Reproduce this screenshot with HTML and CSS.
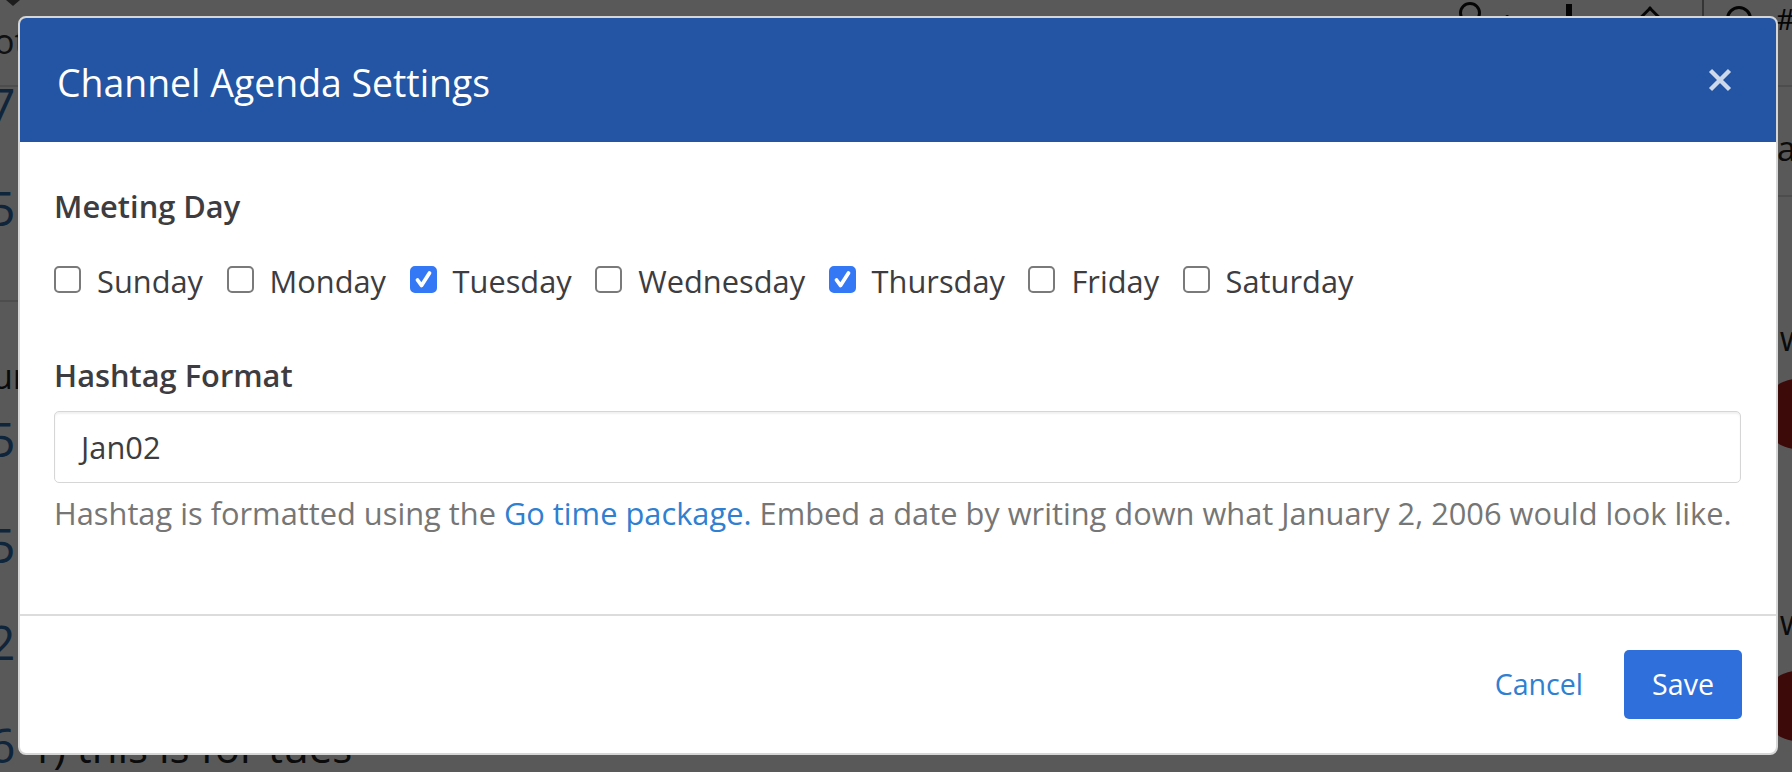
FILE: index.html
```html
<!DOCTYPE html>
<html lang="en">
<head>
<meta charset="utf-8">
<title>Channel Agenda Settings</title>
<link rel="stylesheet" href="styles.css">
</head>
<body>
<div class="page">
  <header class="topbar">
    <div class="top-left">
      <span class="chev"></span>
      <span class="desc">ot</span>
    </div>
    <div class="top-right">
      <span class="ic-circle"></span>
      <span class="ic-num">1</span>
      <span class="ic-bar"></span>
      <span class="ic-roof"></span>
      <span class="ic-div"></span>
      <span class="ic-circle small"></span>
      <span class="ic-hash">#</span>
    </div>
  </header>
  <div class="content">
    <main class="feed">
      <div class="num n1">7</div>
      <div class="num n2">5</div>
      <div class="rule"></div>
      <div class="word">ur</div>
      <div class="num n3">5</div>
      <div class="num n4">5</div>
      <div class="num n5">2</div>
      <div class="num-row"><span class="num n6">6</span><span class="msg">1) this is for tues</span></div>
    </main>
    <aside class="side">
      <div class="side-a">a</div>
      <div class="side-rule"></div>
      <div class="side-w">w</div>
      <div class="avatar"></div>
      <div class="side-w w2">w</div>
      <div class="avatar av2"></div>
    </aside>
  </div>
</div>

<div class="backdrop"></div>

<div class="modal-wrap">
  <div class="modal" role="dialog">
    <div class="modal-header">
      <h4 class="modal-title">Channel Agenda Settings</h4>
      <button class="close" aria-label="Close">
        <svg width="24" height="24" viewBox="0 0 24 24"><path d="M2.5 2.5 L21.5 21.5 M21.5 2.5 L2.5 21.5" stroke="currentColor" stroke-width="4.4" fill="none"/></svg>
      </button>
    </div>
    <div class="modal-body">
      <div class="control-label">Meeting Day</div>
      <div class="days">
        <label class="day"><span class="cb"></span>Sunday</label>
        <label class="day"><span class="cb"></span>Monday</label>
        <label class="day"><span class="cb on"><svg width="27" height="27" viewBox="0 0 27 27"><path d="M7.5 14 L11.5 19.5 L19.5 7" stroke="#fff" stroke-width="3.8" fill="none" stroke-linecap="round" stroke-linejoin="round"/></svg></span>Tuesday</label>
        <label class="day"><span class="cb"></span>Wednesday</label>
        <label class="day"><span class="cb on"><svg width="27" height="27" viewBox="0 0 27 27"><path d="M7.5 14 L11.5 19.5 L19.5 7" stroke="#fff" stroke-width="3.8" fill="none" stroke-linecap="round" stroke-linejoin="round"/></svg></span>Thursday</label>
        <label class="day"><span class="cb"></span>Friday</label>
        <label class="day"><span class="cb"></span>Saturday</label>
      </div>
      <div class="control-label second">Hashtag Format</div>
      <div class="form-control">Jan02</div>
      <p class="help">Hashtag is formatted using the <a class="link" href="#">Go time package.</a> Embed a date by writing down what January 2, 2006 would look like.</p>
    </div>
    <div class="modal-footer">
      <button class="btn btn-link">Cancel</button>
      <button class="btn btn-primary">Save</button>
    </div>
  </div>
</div>
</body>
</html>
```

FILE: styles.css
```css
* { box-sizing: border-box; }

html, body {
  margin: 0;
  padding: 0;
  width: 1792px;
  height: 772px;
  overflow: hidden;
  background: #fff;
  font-family: "Open Sans", "Liberation Sans", sans-serif;
}

/* ---------- background page (seen only at the edges) ---------- */
.page {
  width: 1792px;
  height: 772px;
  overflow: hidden;
  background: #fff;
}

.topbar {
  height: 87px;
  border-bottom: 2px solid #dcdcdc;
  display: flex;
  justify-content: space-between;
}

.top-left {
  display: flex;
  flex-direction: column;
  padding-left: 2px;
}

.chev {
  width: 0;
  height: 0;
  margin-left: 4px;
  border-left: 7px solid transparent;
  border-right: 7px solid transparent;
  border-top: 6px solid #555;
}

.desc {
  font-size: 34px;
  line-height: 1;
  color: #333;
  margin-top: 18px;
  margin-left: -8px;
}

.top-right {
  display: flex;
  align-items: flex-start;
}

.ic-circle {
  width: 22px;
  height: 22px;
  border: 3px solid #111;
  border-radius: 50%;
  margin-top: 2px;
  margin-right: 18px;
}
.ic-circle.small { width: 26px; height: 26px; margin-top: 6px; margin-right: 24px; }

.ic-num {
  font-size: 26px;
  line-height: 1;
  color: #111;
  margin-top: 10px;
  margin-right: 52px;
}

.ic-bar {
  width: 6px;
  height: 22px;
  background: #111;
  margin-top: 4px;
  margin-right: 64px;
}

.ic-roof {
  width: 28px;
  height: 28px;
  border-top: 3px solid #111;
  border-left: 3px solid #111;
  transform: rotate(45deg);
  margin-top: 12px;
  margin-right: 38px;
}

.ic-div {
  width: 2px;
  height: 40px;
  background: #999;
  margin-right: 22px;
}

.ic-hash {
  font-size: 30px;
  line-height: 1;
  color: #111;
  margin-top: 4px;
  width: 16px;
  overflow: hidden;
}

.content {
  display: flex;
  justify-content: space-between;
}

.feed {
  display: flex;
  flex-direction: column;
  width: 420px;
}

.num {
  font-size: 48px;
  line-height: 1;
  color: #2c6aa8;
  margin-left: -12px;
}
.n1 { margin-top: -6px; }
.n2 { margin-top: 55px; }
.rule { height: 2px; background: #dcdcdc; margin-top: 68px; }
.word { font-size: 34px; line-height: 1; color: #222; margin-top: 57px; margin-left: -8px; }
.n3 { margin-top: 22px; }
.n4 { margin-top: 58px; }
.n5 { margin-top: 49px; }
.num-row { display: flex; align-items: baseline; margin-top: 55px; }
.num-row .num { margin-left: -12px; }
.msg { font-size: 42px; line-height: 1; color: #222; margin-left: 14px; }

.side {
  width: 30px;
  display: flex;
  flex-direction: column;
  align-items: flex-end;
}
.side-a { font-size: 34px; line-height: 1; color: #222; margin-top: 44px; margin-right: -4px; }
.side-rule { width: 30px; height: 2px; background: #dcdcdc; margin-top: 30px; }
.side-w { font-size: 34px; line-height: 1; color: #222; margin-top: 124px; margin-right: -14px; }
.w2 { margin-top: 156px; }
.avatar { width: 70px; height: 70px; border-radius: 50%; background: #b01f1f; margin-right: -40px; margin-top: 24px; }
.av2 { margin-top: 32px; }

.backdrop {
  position: fixed;
  inset: 0;
  background: rgba(0, 0, 0, 0.65);
}

/* ---------- modal ---------- */
.modal-wrap {
  position: fixed;
  inset: 0;
  padding: 16px 0 0 18px;
}

.modal {
  width: 1760px;
  background: #fff;
  border: 2px solid #d6d6d6;
  border-radius: 8px;
  overflow: hidden;
  color: #3d3c40;
}

.modal-header {
  height: 124px;
  background: #2355a4;
  display: flex;
  align-items: center;
  justify-content: space-between;
  padding: 0 44px 0 37px;
}

.modal-title {
  margin: 6px 0 0 0;
  font-size: 37.4px;
  font-weight: 400;
  line-height: 1;
  color: #fff;
}

.close {
  border: 0;
  background: none;
  padding: 0;
  width: 24px;
  height: 24px;
  color: rgba(255, 255, 255, 0.78);
  display: flex;
}

.modal-body {
  padding: 42px 35px 79px 34px;
  font-size: 30.8px;
  line-height: 44px;
}

.control-label {
  font-weight: 600;
  height: 44px;
  margin-bottom: 31px;
}
.control-label.second {
  margin-bottom: 14px;
}

.days {
  display: flex;
  height: 44px;
  align-items: center;
  gap: 23.5px;
  margin-bottom: 50px;
}

.day {
  display: flex;
  align-items: center;
}

.cb {
  width: 27px;
  height: 27px;
  border: 2px solid #7a7a7a;
  border-radius: 5px;
  margin-right: 16px;
  margin-bottom: 3px;
  background: #fff;
  display: flex;
}
.cb.on {
  background: #3478f6;
  border-color: #3478f6;
}
.cb.on svg { margin: -2px; }

.form-control {
  height: 72px;
  border: 1px solid #d6d6d6;
  border-radius: 5px;
  box-shadow: inset 0 2px 2px rgba(0, 0, 0, 0.06);
  padding: 0 26px;
  display: flex;
  align-items: center;
  color: #3d3c40;
}

.help {
  margin: 8px 0 0 0;
  color: #767676;
}

.link {
  color: #2f80d0;
  text-decoration: none;
}

.modal-footer {
  border-top: 2px solid #dcdcdc;
  padding: 34px 34px 34px 0;
  display: flex;
  justify-content: flex-end;
}

.btn {
  font-family: inherit;
  font-size: 28.6px;
  line-height: 1;
  height: 69px;
  padding: 0 28px;
  border: 0;
  border-radius: 5px;
}

.btn-link {
  background: none;
  color: #2f80d0;
  margin-right: 13px;
}

.btn-primary {
  background: #2e6fdb;
  color: #fff;
}
```
